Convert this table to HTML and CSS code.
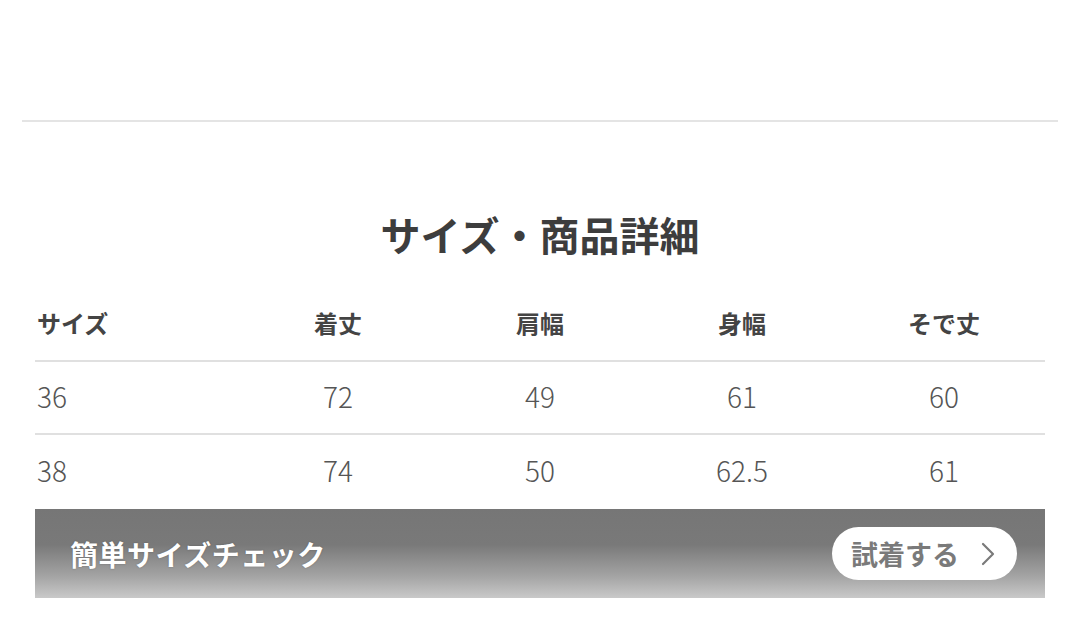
FILE: index.html
```html
<!DOCTYPE html>
<html lang="ja">
<head>
<meta charset="utf-8">
<link rel="stylesheet" href="styles.css">
</head>
<body>
<div class="page">
  <div class="top-space"></div>
  <div class="divider"></div>
  <section class="details">
    <h2 class="title">サイズ・商品詳細</h2>
    <div class="size-table">
      <div class="row head">
        <div class="cell first">サイズ</div>
        <div class="cell">着丈</div>
        <div class="cell">肩幅</div>
        <div class="cell">身幅</div>
        <div class="cell">そで丈</div>
      </div>
      <div class="row">
        <div class="cell first">36</div>
        <div class="cell">72</div>
        <div class="cell">49</div>
        <div class="cell">61</div>
        <div class="cell">60</div>
      </div>
      <div class="row last">
        <div class="cell first">38</div>
        <div class="cell">74</div>
        <div class="cell">50</div>
        <div class="cell">62.5</div>
        <div class="cell">61</div>
      </div>
    </div>
    <div class="banner">
      <span class="banner-text">簡単サイズチェック</span>
      <span class="try-btn">試着する
        <svg class="chev" width="14" height="24" viewBox="0 0 14 24"><path d="M2 2 L12 12 L2 22" fill="none" stroke="#7a7a7a" stroke-width="2.2" stroke-linecap="round" stroke-linejoin="round"/></svg>
      </span>
    </div>
  </section>
</div>
</body>
</html>
```
FILE: styles.css
```css
html, body {
  margin: 0;
  padding: 0;
  background: #ffffff;
}
body {
  font-family: "Noto Sans CJK JP", "Noto Sans", sans-serif;
}
.page {
  padding: 0 22px;
}
.top-space {
  height: 120px;
}
.divider {
  height: 0;
  border-top: 2px solid #e4e4e4;
}
.details {
  padding: 0 13px;
}
.title {
  margin: 84px 0 26px;
  text-align: center;
  font-size: 40px;
  line-height: 57px;
  font-weight: 700;
  color: #3d3d3d;
  letter-spacing: 0;
}
.size-table {
  display: flex;
  flex-direction: column;
}
.row {
  display: grid;
  grid-template-columns: repeat(5, 1fr);
  height: 73px;
  box-sizing: border-box;
  border-bottom: 2px solid #e0e0e0;
  align-items: center;
}
.row.last {
  border-bottom: none;
  height: 74px;
}
.cell {
  text-align: center;
  font-size: 28px;
  font-weight: 300;
  color: #555555;
  line-height: 1;
  margin-top: -4px;
}
.cell.first {
  text-align: left;
  padding-left: 2px;
}
.head .cell {
  font-size: 24px;
  font-weight: 700;
  color: #444444;
  margin-top: -4px;
}
.banner {
  height: 89px;
  display: flex;
  align-items: center;
  justify-content: space-between;
  padding: 0 28px 0 35px;
  background: linear-gradient(to bottom, #767676 0%, #797979 40%, #a3a3a3 75%, #c9c9c9 100%);
}
.banner-text {
  color: #ffffff;
  font-size: 28px;
  font-weight: 700;
  letter-spacing: 0.5px;
  text-shadow: 0 0 2px rgba(0,0,0,0.25);
}
.try-btn {
  display: flex;
  align-items: center;
  gap: 22px;
  height: 53px;
  width: 185px;
  box-sizing: border-box;
  padding: 0 0 0 19px;
  background: #ffffff;
  border-radius: 27px;
  color: #7a7a7a;
  font-size: 27px;
  font-weight: 700;
}
.chev {
  display: block;
}
```
